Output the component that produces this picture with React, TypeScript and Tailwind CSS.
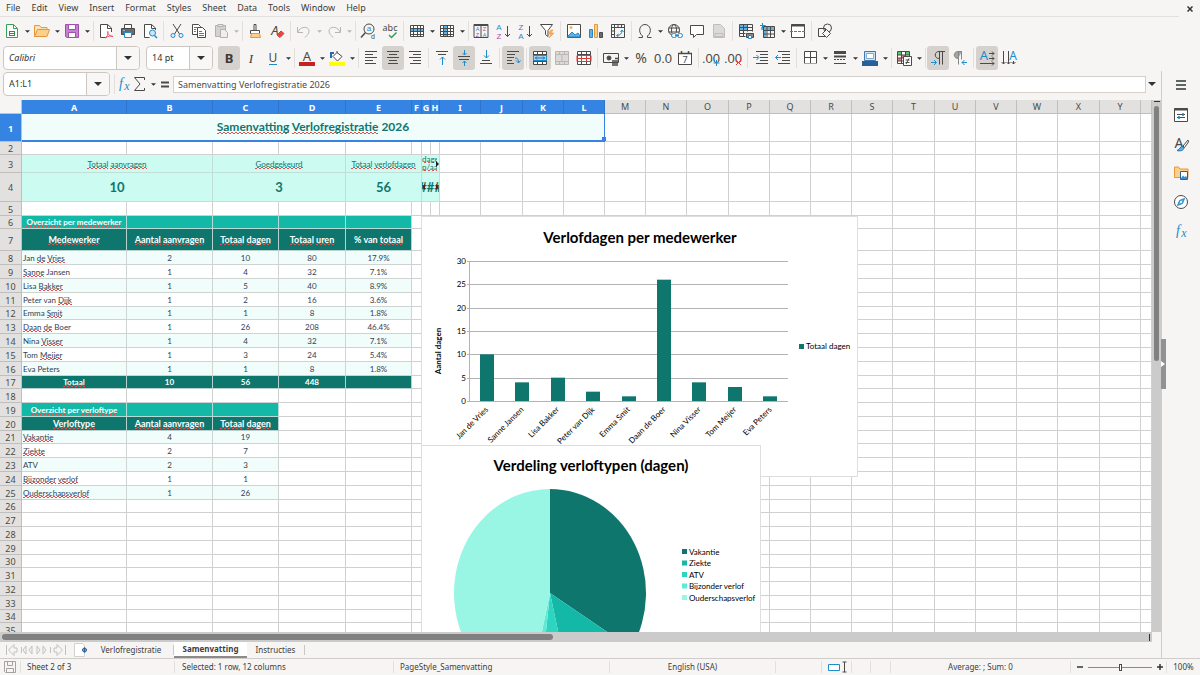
import React from 'react';
import clsx from 'clsx';

const DARK = '#4a4a48';
const BLUE = '#1e8bcd';
const PURPLE = '#a04fb0';
const ORANGE = '#e8963a';
const RED = '#d93a3a';

const grid = (
  <path d="M1.5 2.5h13v11h-13zM1.5 5.5h13M1.5 8.5h13M1.5 11.5h13M4.5 2.5v11M8.5 2.5v11M11.5 2.5v11" />
);

const glyph = (text: string, x: number, y: number, size: number, fill = DARK, extra = "font-['Noto_Sans',sans-serif]") => (
  <text x={x} y={y} fontSize={size} fill={fill} stroke="none" textAnchor="middle" className={extra}>
    {text}
  </text>
);

const SMALL = "font-['Liberation_Sans',sans-serif]";

const fx = (
  <>
    <text x="5" y="12" fontSize="14" fill={BLUE} stroke="none" textAnchor="middle" className="font-['Liberation_Serif',serif] italic">f</text>
    <text x="11" y="14" fontSize="12" fill={BLUE} stroke="none" textAnchor="middle" className="font-['Liberation_Serif',serif] italic">x</text>
  </>
);

const ICONS: Record<string, React.ReactNode> = {
  new: (
    <>
      <path d="M2.5 1.5h7l4 4v9h-11z" fill="#fff" stroke="#38a157" />
      <path d="M9.5 1.5v4h4" stroke="#38a157" />
      <path d="M5 8.5h6M5 10.5h6M5 12.5h6M5.5 8v5M10.5 8v5" stroke="#2e8f4b" />
    </>
  ),
  open: (
    <>
      <path d="M.5 13.5v-11h5l1.5 2h6v3" fill="#fbe3b8" stroke={ORANGE} />
      <path d="M.5 13.5l3-7h12l-2.5 7z" fill="#fbd08c" stroke={ORANGE} />
    </>
  ),
  save: (
    <>
      <path d="M1.5 1.5h13v13h-12l-1-1z" fill="#c583cf" stroke={PURPLE} />
      <path d="M4.5 1.5h7v5h-7z" fill="#fff" stroke={PURPLE} />
      <path d="M4.5 9.5h7v5h-7z" fill="#fff" stroke={PURPLE} />
    </>
  ),
  pdf: (
    <>
      <path d="M13.5 9v-4l-4-3.5h-7v13h6" fill="#fff" />
      <path d="M9.5 1.5v4h4" />
      <path d="M7 15c2-1 3.5-4 3-6.5-1.5 0 0 4.500 5 5-2-1-5-.5-8 1.5z" stroke="#e8556a" />
    </>
  ),
  print: (
    <>
      <path d="M4.5 5v-3.5h7v3.5" fill="#fff" />
      <path d="M1.5 5.5h13v6h-13z" fill="#6b6b69" />
      <path d="M4.5 9.5h7v5h-7z" fill="#fff" stroke={BLUE} />
      <path d="M3 7.5h2" stroke="#7cc3ee" />
    </>
  ),
  preview: (
    <>
      <path d="M13.5 7v-2l-4-3.500h-7v13h5" fill="#fff" />
      <path d="M9.5 1.5v4h4" />
      <circle cx="10.5" cy="10" r="3" fill="#cde6f7" stroke={BLUE} />
      <path d="M12.5 12.5l2.5 2.5" stroke={BLUE} strokeWidth="1.5" />
    </>
  ),
  cut: (
    <>
      <path d="M4 1l6.5 10M12 1l-6.5 10" />
      <circle cx="4" cy="12.5" r="2" stroke={BLUE} />
      <circle cx="12" cy="12.5" r="2" stroke={BLUE} />
    </>
  ),
  copy: (
    <>
      <path d="M1.5 1.5h6l2 2v8h-8z" fill="#fff" />
      <path d="M6.5 4.5h5l3 3v7h-8z" fill="#fff" />
      <path d="M8 8.5h3M8 10.5h5M8 12.5h5M3 4.5h3M3 6.5h2M3 8.5h2" stroke={BLUE} />
    </>
  ),
  paste: (
    <>
      <path d="M2.5 2.5h10v11h-10z" fill="#d4d2cf" stroke="#b4b1ad" />
      <path d="M5 1.5h5v2h-5z" fill="#e8e6e3" stroke="#b4b1ad" />
      <path d="M7.5 6.5h4l3 3v5h-7z" fill="#efeeec" stroke="#b4b1ad" />
    </>
  ),
  brush: (
    <>
      <path d="M7 1.5h2v6h-2zM3.5 7.5h9v3h-9z" fill="#fff" />
      <path d="M4.5 10.5h8l1 4h-10z" fill="#fbd08c" stroke={ORANGE} />
    </>
  ),
  clear: (
    <>
      {glyph('A', 6, 12, 13, DARK, "italic font-['Noto_Sans',sans-serif]")}
      <path d="M8 12l4-4 3 2.5-4 4z" fill="#e2474f" stroke={RED} />
    </>
  ),
  undo: <path d="M1.5 4v5.5h5.5M2 9c2-6 11-6 11-1 0 3-2 4-4 6.5" stroke="#b9b6b2" />,
  redo: <path d="M14.5 4v5.5h-5.5M14 9c-2-6-11-6-11-1 0 3 2 4 4 6.5" stroke="#b9b6b2" />,
  find: (
    <>
      <circle cx="9" cy="6" r="5" />
      <path d="M5.5 9.5l-4.5 5" strokeWidth="1.5" />
      {glyph('a', 9, 7.5, 8, BLUE, SMALL)}
      {glyph('d', 13, 15.5, 7, DARK, SMALL)}
    </>
  ),
  spell: (
    <>
      {glyph('abc', 8, 8, 9)}
      <path d="M7 12l2.5 2.5 5-5" stroke="#32a058" strokeWidth="1.5" />
    </>
  ),
  row: (
    <>
      <path d="M1 3h14v10h-14z" fill="#fff" stroke="none" />
      <path d="M1 5.5h14v3h-14z" fill="#5fb2e6" stroke="none" />
      {grid}
    </>
  ),
  col: (
    <>
      <path d="M1 2h14v12h-14z" fill="#fff" stroke="none" />
      <path d="M5 2h4v12h-4z" fill="#5fb2e6" stroke="none" />
      {grid}
    </>
  ),
  sort: (
    <>
      <path d="M1 1.5h14v13h-14zM8 1v14M1 2.5h14" />
      {glyph('A', 4.5, 8, 5.5, BLUE, SMALL)}
      {glyph('Z', 4.5, 14, 5.500, PURPLE, SMALL)}
      {glyph('Z', 11.5, 8, 5.5, PURPLE, SMALL)}
      {glyph('A', 11.5, 14, 5.5, BLUE, SMALL)}
    </>
  ),
  asc: (
    <>
      {glyph('A', 4, 6.5, 8, BLUE, SMALL)}
      {glyph('Z', 4, 15.5, 8, PURPLE, SMALL)}
      <path d="M12.5 3v10.5M10 11l2.5 2.5 2.5-2.5" />
    </>
  ),
  desc: (
    <>
      {glyph('Z', 4, 6.5, 8, PURPLE, SMALL)}
      {glyph('A', 4, 15.5, 8, BLUE, SMALL)}
      <path d="M12.5 3v10.5M10 11l2.5 2.5 2.5-2.5" />
    </>
  ),
  filter: (
    <>
      <path d="M1.5 1.5h12l-4.5 6v6l-2.5-2v-4z" fill="#fff" />
      <path d="M12 7l-3 4h3l-2 4 5-5h-3l2-3z" fill="#f7b45c" stroke={ORANGE} strokeWidth=".6" />
    </>
  ),
  image: (
    <>
      <path d="M1.5 1.5h13v13h-13z" fill="#fff" />
      <path d="M2 13l4-4 3 3 3-2 2 3v1h-12z" fill="#5fb2e6" stroke={BLUE} />
      <circle cx="5" cy="4.5" r="1.5" fill="#f7b45c" stroke="none" />
    </>
  ),
  chart: (
    <>
      <path d="M1.5 6.5h3v8h-3z" fill="#5fb2e6" stroke={BLUE} />
      <path d="M6.5 1.5h3v13h-3z" fill="#fbd08c" stroke={ORANGE} />
      <path d="M11.5 9.5h3v5h-3z" fill="#6b6b69" />
    </>
  ),
  pivot: (
    <>
      <path d="M1.5 1.5h13v13h-13zM1.5 4.5h13M4.5 1.5v13M8 2v2M11.5 2v2M2 8h2M2 11.5h2" />
      <path d="M7 12.5c3 0 5-2 5-5M10.5 9l1.5-2 1.5 2M8.5 11l-2 1.5 2 1.5" stroke={BLUE} />
    </>
  ),
  omega: <path d="M1.5 14.5h4v-1.5c-5-4-3-11.5 2.5-11.5s7.5 7.5 2.5 11.5v1.5h4" />,
  link: (
    <>
      <circle cx="7" cy="7" r="5.5" />
      <ellipse cx="7" cy="7" rx="2.5" ry="5.5" />
      <path d="M1.5 5h11M1.5 9h11" />
      <path d="M5 10h11v5h-11z" fill="#f6f5f4" stroke="none" />
      <rect x="4.5" y="10.5" width="5" height="4" rx="2" stroke={BLUE} />
      <rect x="10.5" y="10.5" width="5" height="4" rx="2" stroke={BLUE} />
      <path d="M8 12.5h4" stroke={BLUE} />
    </>
  ),
  comment: <path d="M1.5 2.5h13v9h-7l-3 3v-3h-3z" fill="#fff" />,
  header: <path d="M2.5 1.5h7l4 4v9h-11zM4 10.5h8v3h-8z" fill="#dcdad7" stroke="#c1beba" />,
  printArea: (
    <>
      <path d="M1 2h9v6h-9z" fill="#5fb2e6" stroke="none" />
      <path d="M1.5 13.5v-12h13v7M1.5 4.5h13M1.5 7.5h13M1.5 10.5h6M5.5 1.5v12M9.5 1.5v7M1.5 13.5h6" />
      <path d="M8.5 10.5h7v4h-7z" fill="#8a8886" />
      <path d="M10.5 12.5h3v3h-3z" fill="#fff" stroke={BLUE} />
    </>
  ),
  freeze: (
    <>
      <path d="M1 4h14v3h-14zM3 2h3v13h-3z" fill="#5fb2e6" stroke="none" />
      <path d="M3.5 3.5h11v11h-11zM3.5 7.5h11M3.5 11h11M7 3.5v11M10.5 3.5v11" />
      <path d="M2.5 0v5M0 2.5h5" stroke={BLUE} />
    </>
  ),
  split: (
    <>
      <path d="M1.5 1.5h13v13h-13z" fill="#fff" />
      <path d="M1 2.5h14" strokeWidth="2" />
      <path d="M0 8.5h16" stroke={BLUE} strokeDasharray="3 1" />
    </>
  ),
  shapes: (
    <>
      <path d="M1.5 5.5h7v8h-7z" />
      <circle cx="10.5" cy="5" r="4" />
      <path d="M9.5 6.5l4 4-4 4-4-4z" fill="#f6f5f4" />
    </>
  ),
  bold: glyph('B', 8, 12.5, 13, '#3a3a38', "font-bold font-['Noto_Sans',sans-serif]"),
  italic: glyph('I', 8, 12.5, 13, '#3a3a38', "italic font-['Liberation_Serif',serif]"),
  underline: (
    <>
      {glyph('U', 8, 11.5, 12)}
      <path d="M4 14.5h8" stroke={BLUE} />
    </>
  ),
  fontColor: (
    <>
      {glyph('A', 8, 10.5, 13)}
      <path d="M0 14h16" stroke="#c9211e" strokeWidth="4" />
    </>
  ),
  highlight: (
    <>
      <path d="M4 6.5l4-4 5 4-4.5 4.5zM8 3v-2" fill="#fff" />
      <path d="M2 8v-5h3" stroke="#1e6fb0" strokeWidth="2" />
      <path d="M0 14h16" stroke="#ffff00" strokeWidth="4" />
    </>
  ),
  left: <path d="M2 1.5h12M2 4.5h8M2 7.5h12M2 10.5h8M2 13.5h11" />,
  center: <path d="M2 1.5h12M4 4.5h8M2 7.5h12M4 10.5h8M3 13.5h10" />,
  right: <path d="M2 1.5h12M6 4.5h8M2 7.5h12M6 10.5h8M3 13.5h11" />,
  top: (
    <>
      <path d="M2 1.5h12M4 4.5h8" />
      <path d="M8.5 15v-8M6 9.5l2.5-2.5 2.5 2.5" stroke={BLUE} />
    </>
  ),
  middle: (
    <>
      <path d="M2 6.5h12M3 9.5h10" />
      <path d="M8.5 0v5M6.5 3l2 2 2-2M8.5 16v-5M6.5 13l2-2 2 2" stroke={BLUE} />
    </>
  ),
  bottom: (
    <>
      <path d="M4 10.5h8M2 13.5h12" />
      <path d="M8.5 0v8M6 5.5l2.5 2.5 2.5-2.5" stroke={BLUE} />
    </>
  ),
  wrap: (
    <>
      <path d="M2 1.5h12M2 4.5h8M2 7.5h7M2 10.5h5M2 13.5h7" />
      <path d="M10 8c3 0 3.500 2 3.500 4.5M11 10.5l2.5 2.5 2-2.5" stroke={BLUE} />
    </>
  ),
  merge: (
    <>
      <path d="M1.5 1.5h13v13h-13z" fill="#fff" />
      <path d="M1.5 4.5h13M1.5 11.5h13M5.5 1.5v3M10.5 1.5v3M5.5 11.5v3M10.5 11.5v3" />
      <path d="M1.5 5.5h13v5h-13z" fill="#a9d5f2" stroke={BLUE} />
      <path d="M3 8h10M5 6.5l-1.5 1.5 1.5 1.5M11 6.5l1.5 1.5-1.5 1.5" stroke="#1e6fb0" />
    </>
  ),
  unmerge: <path d="M1.5 1.5h13v13h-13zM1.5 4.5h13M1.5 11.5h13M5.5 1.5v3M10.5 1.5v3M5.5 11.5v3M10.5 11.5v3M8 5v6" fill="#dcdad7" stroke="#bab7b3" />,
  splitCells: (
    <>
      <path d="M1.5 1.5h13v13h-13zM1.5 4.5h13M5.5 1.5v13M10.5 1.5v13" fill="#fff" />
      <path d="M1 5.5h14v6h-14zM5.5 5.5v6M10.5 5.5v6M1 8.5h14" stroke={RED} />
    </>
  ),
  currency: (
    <>
      <path d="M.5 3.5h15v9h-15z" />
      <circle cx="6" cy="8" r="2" fill={DARK} />
      <path d="M9 11h6M9 13h6M9 15h6M12 8.5h3" strokeWidth="1.5" />
    </>
  ),
  percent: glyph('%', 8, 13, 14),
  number: glyph('0.0', 8, 13, 13, DARK, SMALL),
  date: (
    <>
      <path d="M1.5 3.5h13v11h-13z" fill="#fff" />
      <path d="M1 3.5h14M4.5 1v3M11.5 1v3" strokeWidth="1.5" />
      {glyph('7', 8, 13, 9)}
    </>
  ),
  addDecimal: (
    <>
      {glyph('.00', 7, 12.5, 13, DARK, SMALL)}
      <path d="M12.5 10v6M9.500 13h6" stroke={BLUE} />
    </>
  ),
  delDecimal: (
    <>
      {glyph('.00', 7, 12.5, 13, DARK, SMALL)}
      <path d="M10 10l5 5M15 10l-5 5" stroke={RED} />
    </>
  ),
  indent: (
    <>
      <path d="M3 1.5h12M7 4.5h8M7 7.5h8M7 10.5h8M3 13.5h12" />
      <path d="M0 7.5h5.5M3.5 5l2.5 2.5-2.5 2.5" stroke={BLUE} />
    </>
  ),
  outdent: (
    <>
      <path d="M3 1.5h12M7 4.5h8M7 7.5h8M7 10.5h8M3 13.5h12" />
      <path d="M.5 7.5h5.5M3 5l-2.5 2.5 2.5 2.5" stroke={BLUE} />
    </>
  ),
  borders: (
    <>
      <path d="M2.5 13.5v-12h12v12M2.5 7.5h12M8.5 1.5v12" fill="#fff" />
      <path d="M2 13.5h13" stroke={ORANGE} />
    </>
  ),
  lines: (
    <>
      <path d="M2 2.5h12" strokeWidth="3" />
      <path d="M2 6.5h12" strokeWidth="2" />
      <path d="M2 9.5h12" strokeDasharray="2 1" />
      <path d="M2 13.5h12" />
    </>
  ),
  borderColor: (
    <>
      <path d="M2.5 1.5h11v9h-11z" fill="#cde6f7" stroke="#3c78b4" />
      <path d="M4.5 3.5h7v5h-7z" fill="#fff" stroke="#8aa9c4" />
      <path d="M0 13.5h16" stroke="#2a6099" strokeWidth="5" />
    </>
  ),
  conditional: (
    <>
      <path d="M1.5 1.5h12v12h-12z" fill="#fff" />
      <path d="M2 2h4v3h-4zM10 2h3v3h-3z" fill="#5ec274" stroke="none" />
      <path d="M6 5h4v3h-4zM2 8h4v3h-4z" fill="#ef7a7a" stroke="none" />
      <path d="M1.5 5h12M1.5 8h12M1.5 11h12M5.5 1.5v12M9.5 1.5v12" />
      <path d="M7.5 6.5h8v9h-8z" fill="#fff" />
      <path d="M9.5 10h4M9.5 12.5h4M13 8.5l-3 5.5" />
    </>
  ),
  ltr: (
    <>
      <path d="M9 8.5c-5 0-5-7 0-7h6M9.5 1.5v13M12.5 1.5v13" />
      <path d="M1 12.5h5M4 10l2.5 2.5-2.5 2.5" stroke={BLUE} />
    </>
  ),
  rtl: (
    <>
      <path d="M6 8.5c-5 0-5-7 0-7h4M6.5 1.5v13M9.5 1.5v8" fill="#a5a3a0" stroke="#8a8885" />
      <path d="M10 12.5h5M12.5 10l-2.500 2.5 2.5 2.5" stroke={BLUE} />
    </>
  ),
  horizontal: (
    <>
      {glyph('A', 5, 10, 13, BLUE)}
      <path d="M10 3.5h5M13 1.5l2 2-2 2M10 8.5h5M13 6.5l2 2-2 2M1 13.5h14M13 11.5l2 2-2 2" />
    </>
  ),
  vertical: (
    <>
      {glyph('A', 12, 10, 12, BLUE)}
      <path d="M2.5 1v13M.5 12l2 2 2-2M7.5 1v13M5.5 12l2 2 2-2M12.5 11v3M10.5 12l2 2 2-2" />
    </>
  ),
  fx,
  sigma: <path d="M12.5 4v-2.5h-10l5.5 6.5-5.5 6.5h10v-2.5" />,
  equals: <path d="M4 6.5h8M4 10.5h8" strokeWidth="2" />,
  hamburger: <path d="M3 4h10M3 8h10M3 12h10" stroke="#2e3436" strokeWidth="1.5" />,
  properties: (
    <>
      <path d="M1.5 1.5h13v13h-13z" fill="#fff" />
      <path d="M1 2.5h14" strokeWidth="2" />
      <path d="M4 7.5h8M4 10.5h8" />
      <path d="M10 6v3M6 9v3" stroke={BLUE} strokeWidth="1.5" />
    </>
  ),
  styles: (
    <>
      {glyph('A', 6, 11.5, 14)}
      <path d="M15 4l-5 6 1.5 1.5 4-5.5z" fill="#fff" />
      <path d="M4 14.5c3 1 7 0 7-3l-2-1c-2 0-2 3-5 4z" fill="#5fb2e6" stroke="#1e6fb0" />
    </>
  ),
  gallery: (
    <>
      <path d="M1.5 12.5v-10.5h4l1.5 2h8v8.5z" fill="#fbd08c" stroke={ORANGE} />
      <path d="M7.5 6.5h7v8h-7z" fill="#fff" stroke="#2a6099" />
      <path d="M8 13l2-2.5 1.5 1.5 1.5-1 1 1.5v1.5h-6z" fill="#3a8fd0" stroke="none" />
    </>
  ),
  navigator: (
    <>
      <circle cx="8" cy="8" r="6.5" fill="#fff" />
      <path d="M11.5 4.5l-2 5-5 2 2-5z" fill="#5fb2e6" stroke={BLUE} />
      <circle cx="8" cy="8" r="1" fill="#fff" stroke="none" />
    </>
  ),
  docSave: (
    <>
      <path d="M2.5 2.5h11v11h-10l-1-1z" stroke="#a5a3a0" />
      <path d="M5.5 2.5h5v4h-5zM4.5 9.5h7v4h-7z" stroke="#a5a3a0" />
    </>
  ),
};

const Icon: React.FC<{ name: string }> = ({ name }) => (
  <svg viewBox="0 0 16 16" fill="none" stroke={DARK} strokeWidth="1" className="size-4 shrink-0 overflow-visible" aria-hidden="true">
    {ICONS[name]}
  </svg>
);

const Caret: React.FC<{ big?: boolean; faded?: boolean }> = ({ big, faded }) => (
  <svg viewBox="0 0 8 4" className={clsx(big ? 'h-1 w-2' : 'h-[3px] w-[5px]', 'shrink-0')} fill={faded ? '#b9b6b2' : '#2e3436'} aria-hidden="true">
    <path d="M0 0h8l-4 4z" />
  </svg>
);

interface Tool {
  icon: string;
  label: string;
  menu?: boolean;
  active?: boolean;
  disabled?: boolean;
}

type ToolGroup = Tool[];

const STANDARD: ToolGroup[] = [
  [
    { icon: 'new', label: 'New', menu: true },
    { icon: 'open', label: 'Open', menu: true },
    { icon: 'save', label: 'Save', menu: true },
  ],
  [
    { icon: 'pdf', label: 'Export as PDF' },
    { icon: 'print', label: 'Print' },
    { icon: 'preview', label: 'Print preview' },
  ],
  [
    { icon: 'cut', label: 'Cut' },
    { icon: 'copy', label: 'Copy' },
    { icon: 'paste', label: 'Paste', menu: true, disabled: true },
  ],
  [
    { icon: 'brush', label: 'Clone formatting' },
    { icon: 'clear', label: 'Clear formatting' },
  ],
  [
    { icon: 'undo', label: 'Undo', menu: true, disabled: true },
    { icon: 'redo', label: 'Redo', menu: true, disabled: true },
  ],
  [
    { icon: 'find', label: 'Find and replace' },
    { icon: 'spell', label: 'Spelling' },
  ],
  [
    { icon: 'row', label: 'Row', menu: true },
    { icon: 'col', label: 'Column', menu: true },
  ],
  [
    { icon: 'sort', label: 'Sort' },
    { icon: 'asc', label: 'Sort ascending' },
    { icon: 'desc', label: 'Sort descending' },
    { icon: 'filter', label: 'AutoFilter' },
  ],
  [
    { icon: 'image', label: 'Insert image' },
    { icon: 'chart', label: 'Insert chart' },
    { icon: 'pivot', label: 'Insert pivot table' },
  ],
  [
    { icon: 'omega', label: 'Special character', menu: true },
    { icon: 'link', label: 'Insert hyperlink' },
    { icon: 'comment', label: 'Insert comment' },
    { icon: 'header', label: 'Headers and footers', disabled: true },
  ],
  [
    { icon: 'printArea', label: 'Define print area' },
    { icon: 'freeze', label: 'Freeze rows and columns', menu: true },
    { icon: 'split', label: 'Split window' },
  ],
  [{ icon: 'shapes', label: 'Show draw functions' }],
];

const FORMATTING: ToolGroup[] = [
  [
    { icon: 'bold', label: 'Bold', active: true },
    { icon: 'italic', label: 'Italic' },
    { icon: 'underline', label: 'Underline', menu: true },
  ],
  [
    { icon: 'fontColor', label: 'Font color', menu: true },
    { icon: 'highlight', label: 'Background color', menu: true },
  ],
  [
    { icon: 'left', label: 'Align left' },
    { icon: 'center', label: 'Center horizontally', active: true },
    { icon: 'right', label: 'Align right' },
  ],
  [
    { icon: 'top', label: 'Align top' },
    { icon: 'middle', label: 'Center vertically', active: true },
    { icon: 'bottom', label: 'Align bottom' },
  ],
  [{ icon: 'wrap', label: 'Wrap text', active: true }],
  [
    { icon: 'merge', label: 'Merge and center', active: true },
    { icon: 'unmerge', label: 'Merge cells', disabled: true },
    { icon: 'splitCells', label: 'Unmerge cells' },
  ],
  [
    { icon: 'currency', label: 'Format as currency', menu: true },
    { icon: 'percent', label: 'Format as percent' },
    { icon: 'number', label: 'Format as number' },
    { icon: 'date', label: 'Format as date' },
  ],
  [
    { icon: 'addDecimal', label: 'Add decimal place' },
    { icon: 'delDecimal', label: 'Delete decimal place' },
  ],
  [
    { icon: 'indent', label: 'Increase indent' },
    { icon: 'outdent', label: 'Decrease indent' },
  ],
  [
    { icon: 'borders', label: 'Borders', menu: true },
    { icon: 'lines', label: 'Border style', menu: true },
    { icon: 'borderColor', label: 'Border color', menu: true },
  ],
  [{ icon: 'conditional', label: 'Conditional formatting', menu: true }],
  [
    { icon: 'ltr', label: 'Left to right', active: true },
    { icon: 'rtl', label: 'Right to left' },
  ],
  [
    { icon: 'horizontal', label: 'Text direction horizontal', active: true },
    { icon: 'vertical', label: 'Text direction vertical' },
  ],
];

const ToolButton: React.FC<{ tool: Tool }> = ({ tool }) => (
  <>
    <button
      type="button"
      aria-label={tool.label}
      disabled={tool.disabled}
      className={clsx('flex h-6 w-[22px] shrink-0 items-center justify-center rounded-[3px]', tool.active && 'bg-[#d5d1cd]')}
    >
      <Icon name={tool.icon} />
    </button>
    {tool.menu && (
      <button type="button" aria-label={`${tool.label} options`} disabled={tool.disabled} className="flex h-6 w-2 shrink-0 items-center justify-center pt-0.5">
        <Caret faded={tool.disabled} />
      </button>
    )}
  </>
);

const ToolGroups: React.FC<{ groups: ToolGroup[] }> = ({ groups }) => (
  <>
    {groups.map((group, i) => (
      <React.Fragment key={i}>
        {i > 0 && (
          <div className={clsx('flex h-5 shrink-0 justify-center', groups[i - 1][groups[i - 1].length - 1].menu ? 'w-1' : 'w-[5px]')}>
            <span className="w-px bg-[#e2dfdc]" />
          </div>
        )}
        {group.map((tool) => (
          <ToolButton key={tool.icon} tool={tool} />
        ))}
      </React.Fragment>
    ))}
  </>
);

const MENUS = ['File', 'Edit', 'View', 'Insert', 'Format', 'Styles', 'Sheet', 'Data', 'Tools', 'Window', 'Help'];

const MenuBar: React.FC = () => (
  <div className="flex h-[17px] shrink-0 items-center justify-between pr-[7px]">
    <nav className="flex h-full flex-1 items-center gap-[11px] border-b border-[#e3e1df] pl-1.5">
      {MENUS.map((menu) => (
        <button key={menu} type="button">{menu}</button>
      ))}
    </nav>
    <button type="button" aria-label="Close document" className="ml-2">
      <svg viewBox="0 0 6 6" className="size-1.5" stroke="#2e3436" strokeWidth="1.5" aria-hidden="true">
        <path d="M.5.5l5 5M5.5.5l-5 5" />
      </svg>
    </button>
  </div>
);

interface ComboProps {
  label: string;
  value: string;
  className: string;
}

const Combo: React.FC<ComboProps> = ({ label, value, className }) => (
  <div className={clsx('relative h-6 shrink-0 overflow-hidden rounded-[4px] border border-[#cdc7c2] bg-white', className)}>
    <select aria-label={label} defaultValue={value} className="h-full w-full appearance-none bg-transparent pl-[5px] text-[9px] text-[#2e3436] outline-none">
      <option>{value}</option>
    </select>
    <span className="pointer-events-none absolute inset-y-0 right-0 flex w-[23px] items-center justify-center border-l border-[#cdc7c2] bg-[#f8f7f6]">
      <Caret big />
    </span>
  </div>
);

const FormulaBar: React.FC = () => (
  <div className="flex h-[29px] shrink-0 items-center pr-[5px] pb-[3px] pl-[3px]">
    <div className="flex h-6 w-[107px] shrink-0 overflow-hidden rounded-[4px] border border-[#cdc7c2] bg-white">
      <input aria-label="Name box" defaultValue="A1:L1" className="w-0 flex-1 pl-[5px] text-[9px] text-[#2e3436] outline-none" />
      <button type="button" aria-label="Named ranges" className="flex w-[23px] items-center justify-center border-l border-[#cdc7c2] bg-[#f8f7f6]">
        <Caret big />
      </button>
    </div>
    <span className="mr-px ml-1 h-5 w-px shrink-0 bg-[#e2dfdc]" />
    <button type="button" aria-label="Function wizard" className="shrink-0"><Icon name="fx" /></button>
    <button type="button" aria-label="Select function" className="flex w-6 shrink-0 items-center gap-[3px]">
      <Icon name="sigma" />
      <Caret />
    </button>
    <button type="button" aria-label="Formula" className="ml-px shrink-0"><Icon name="equals" /></button>
    <input
      aria-label="Formula input"
      defaultValue="Samenvatting Verlofregistratie 2026"
      className="h-[17px] min-w-0 flex-1 border border-[#d3d0cd] bg-white px-1 text-[9px] text-[#4a4a48] outline-none"
    />
    <button type="button" aria-label="Expand formula bar" className="ml-0.5 shrink-0"><Caret big /></button>
  </div>
);

/* Sheet: the last column has no letter and takes whatever width is left */

const COLUMNS: [string, string][] = [
  ['A', 'w-[105px]'], ['B', 'w-[86px]'], ['C', 'w-[66px]'], ['D', 'w-[67px]'], ['E', 'w-[66px]'],
  ['F', 'w-[10px]'], ['G', 'w-[9px]'], ['H', 'w-[9px]'], ['I', 'w-[41px]'], ['J', 'w-[42px]'],
  ['K', 'w-[41px]'], ['L', 'w-[41px]'], ['M', 'w-[41px]'], ['N', 'w-[41px]'], ['O', 'w-[42px]'],
  ['P', 'w-[41px]'], ['Q', 'w-[41px]'], ['R', 'w-[41px]'], ['S', 'w-[41px]'], ['T', 'w-[42px]'],
  ['U', 'w-[41px]'], ['V', 'w-[41px]'], ['W', 'w-[41px]'], ['X', 'w-[42px]'], ['Y', 'w-[41px]'],
  ['', 'w-auto'],
];

const ROW_HEIGHTS = [
  'h-[28px]', 'h-[13px]', 'h-[18px]', 'h-[29px]', 'h-[14px]', 'h-[13px]', 'h-[22px]',
  'h-[14px]', 'h-[14px]', 'h-[14px]', 'h-[14px]', 'h-[13px]', 'h-[14px]', 'h-[14px]', 'h-[14px]', 'h-[14px]', 'h-[13px]',
  'h-[14px]', 'h-[14px]', 'h-[14px]', 'h-[13px]', 'h-[14px]', 'h-[14px]', 'h-[14px]', 'h-[14px]', 'h-[13px]',
  'h-[14px]', 'h-[14px]', 'h-[14px]', 'h-[13px]', 'h-[14px]', 'h-[14px]', 'h-[14px]', 'h-[13px]', 'h-[14px]',
];

const UNKNOWN_WORDS = new Set([
  'Samenvatting', 'Verlofregistratie', 'Totaal', 'aanvragen', 'Goedgekeurd', 'verlofdagen', 'dagen', 'p/aanvraag',
  'Overzicht', 'medewerker', 'Medewerker', 'Aantal', 'uren', 'totaal', 'de', 'Vries', 'Sanne', 'Bakker', 'Dijk',
  'Smit', 'Daan', 'Visser', 'Meijer', 'verloftype', 'Verloftype', 'Vakantie', 'Ziekte', 'Bijzonder', 'verlof',
  'Ouderschapsverlof',
]);

// Two rows of dashes, one pixel apart and out of step, read as a tight zigzag
const SQUIGGLE =
  'bg-[image:linear-gradient(90deg,#e0504c_50%,transparent_50%),linear-gradient(90deg,#e0504c_50%,transparent_50%)] bg-[length:4px_1px] bg-[position:0_100%,2px_calc(100%-1px)] bg-repeat-x';

const Spelled: React.FC<{ text: string }> = ({ text }) => (
  <>
    {text.split(' ').map((word, i) => (
      <React.Fragment key={i}>
        {i > 0 && ' '}
        <span className={clsx(UNKNOWN_WORDS.has(word) && SQUIGGLE)}>{word}</span>
      </React.Fragment>
    ))}
  </>
);

interface Cell {
  text?: string;
  node?: React.ReactNode;
  span?: number;
  className?: string;
}

const EMPLOYEES = [
  { name: 'Jan de Vries', requests: 2, days: 10, hours: 80, share: '17.9%' },
  { name: 'Sanne Jansen', requests: 1, days: 4, hours: 32, share: '7.1%' },
  { name: 'Lisa Bakker', requests: 1, days: 5, hours: 40, share: '8.9%' },
  { name: 'Peter van Dijk', requests: 1, days: 2, hours: 16, share: '3.6%' },
  { name: 'Emma Smit', requests: 1, days: 1, hours: 8, share: '1.8%' },
  { name: 'Daan de Boer', requests: 1, days: 26, hours: 208, share: '46.4%' },
  { name: 'Nina Visser', requests: 1, days: 4, hours: 32, share: '7.1%' },
  { name: 'Tom Meijer', requests: 1, days: 3, hours: 24, share: '5.4%' },
  { name: 'Eva Peters', requests: 1, days: 1, hours: 8, share: '1.8%' },
];

const LEAVE_TYPES = [
  { name: 'Vakantie', requests: 4, days: 19, color: '#0f766e' },
  { name: 'Ziekte', requests: 2, days: 7, color: '#14b8a6' },
  { name: 'ATV', requests: 2, days: 3, color: '#2dd4bf' },
  { name: 'Bijzonder verlof', requests: 1, days: 1, color: '#5eead4' },
  { name: 'Ouderschapsverlof', requests: 1, days: 26, color: '#99f6e4' },
];

const KPI_LABEL = 'bg-[#ccfbf1] border-[#c0dfd8] text-[8px] text-[#0f766e]';
const KPI_VALUE = 'bg-[#ccfbf1] border-[#c0dfd8] text-[13px] font-bold text-[#0f766e]';
const SECTION = 'bg-[#14b8a6] border-[#b5ddd7] text-[8px] font-bold text-white';
const HEADING = 'bg-[#0f766e] border-[#b5d0cd] text-[9px] font-bold text-white';
const TOTAL = 'bg-[#0f766e] border-[#b5d0cd] text-[8px] font-bold text-white';

const dataRow = (values: (string | number)[], index: number): Cell[] =>
  values.map((value, i) => ({
    text: String(value),
    className: clsx(
      'text-[8px] text-[#334155] border-[#cdd4d2]',
      index % 2 === 0 && 'bg-[#f0fdfa]',
      i === 0 && 'pl-px text-left',
    ),
  }));

const sameStyle = (texts: string[], className: string): Cell[] => texts.map((text) => ({ text, className }));

const ROWS: Record<number, Cell[]> = {
  1: [{
    span: 12,
    className: 'bg-[#f0fdfa] border-[#3584e4] border-b-2 text-[12px] font-bold text-[#0f766e]',
    node: (
      <div className="relative">
        <Spelled text="Samenvatting Verlofregistratie 2026" />
        <span className="absolute -right-0.5 -bottom-2 size-1 bg-[#3584e4]" />
      </div>
    ),
  }],
  3: [
    { text: 'Totaal aanvragen', span: 2, className: KPI_LABEL },
    { text: 'Goedgekeurd', span: 2, className: KPI_LABEL },
    { text: 'Totaal verlofdagen', span: 2, className: KPI_LABEL },
    {
      span: 2,
      className: KPI_LABEL,
      node: (
        <div className="relative h-[17px] overflow-hidden text-left leading-[8px]">
          <div className="w-[15px] overflow-hidden"><Spelled text="dagen" /></div>
          <div className="w-[15px] overflow-hidden"><Spelled text="p/aanvraag" /></div>
          <svg viewBox="0 0 3 6" className="absolute top-1.5 right-0 h-1.5 w-[3px]" fill="#2b1a1a" aria-hidden="true"><path d="M0 0l3 3-3 3z" /></svg>
        </div>
      ),
    },
  ],
  4: [
    { text: '10', span: 2, className: KPI_VALUE },
    { text: '3', span: 2, className: KPI_VALUE },
    { text: '56', span: 2, className: KPI_VALUE },
    {
      span: 2,
      className: KPI_VALUE,
      node: (
        <div className="relative flex justify-center overflow-hidden leading-4">
          <span>###</span>
          <svg viewBox="0 0 3 6" className="absolute top-[5px] left-0 h-1.5 w-[3px]" fill="#5a1a1a" aria-hidden="true"><path d="M3 0l-3 3 3 3z" /></svg>
          <svg viewBox="0 0 3 6" className="absolute top-[5px] right-0 h-1.5 w-[3px]" fill="#5a1a1a" aria-hidden="true"><path d="M0 0l3 3-3 3z" /></svg>
        </div>
      ),
    },
  ],
  6: sameStyle(['Overzicht per medewerker', '', '', '', ''], SECTION),
  7: sameStyle(['Medewerker', 'Aantal aanvragen', 'Totaal dagen', 'Totaal uren', '% van totaal'], HEADING),
  17: sameStyle(['Totaal', '10', '56', '448', ''], TOTAL),
  19: sameStyle(['Overzicht per verloftype', '', ''], SECTION),
  20: sameStyle(['Verloftype', 'Aantal aanvragen', 'Totaal dagen'], HEADING),
};

EMPLOYEES.forEach((e, i) => {
  ROWS[8 + i] = dataRow([e.name, e.requests, e.days, e.hours, e.share], i);
});
LEAVE_TYPES.forEach((t, i) => {
  ROWS[21 + i] = dataRow([t.name, t.requests, t.days], i);
});

const fillRow = (cells: Cell[] = []): Cell[] => {
  const used = cells.reduce((sum, cell) => sum + (cell.span ?? 1), 0);
  return [...cells, ...Array.from({ length: COLUMNS.length - used }, () => ({}))];
};

const Sheet: React.FC = () => (
  <table className="w-full table-fixed border-separate border-spacing-0 font-[Lato,sans-serif] leading-3">
    <colgroup>
      <col className="w-[22px]" />
      {COLUMNS.map(([letter, width]) => (
        <col key={letter} className={width} />
      ))}
    </colgroup>
    <thead>
      <tr className="h-[14px] font-['Noto_Sans',sans-serif] text-[9px]">
        <td className="border-r border-b border-[#c4c2c0] bg-[#f6f5f4] p-0" />
        {COLUMNS.map(([letter], i) => (
          <th
            key={letter}
            scope="col"
            className={clsx(
              'border-r p-0 text-center',
              i < 12 ? 'border-[#2f74c9] bg-[#3584e4] pt-px font-bold text-white' : 'border-b border-[#c0bfbd] bg-[#e2e1df] pt-px font-normal text-[#4a4a48]',
            )}
          >
            {letter}
          </th>
        ))}
      </tr>
    </thead>
    <tbody>
      {ROW_HEIGHTS.map((height, i) => (
        <tr key={i} className={height}>
          <th
            scope="row"
            className={clsx(
              "border-r border-b border-[#c0bfbd] p-0 pt-px text-center font-['Noto_Sans',sans-serif] text-[9px] leading-[11px]",
              i === 0 ? 'bg-[#3584e4] font-bold text-white' : 'bg-[#e2e1df] font-normal text-[#4a4a48]',
            )}
          >
            {i + 1}
          </th>
          {fillRow(ROWS[i + 1]).map((cell, j) => (
            <td
              key={j}
              colSpan={cell.span}
              className={clsx('border-r border-b p-0 whitespace-nowrap', cell.className ?? 'border-[#d0d0d0]', !cell.className?.includes('text-left') && 'text-center')}
            >
              {cell.node ?? (cell.text && <Spelled text={cell.text} />)}
            </td>
          ))}
        </tr>
      ))}
    </tbody>
  </table>
);

const BarChart: React.FC = () => {
  const left = 48;
  const base = 185;
  const unit = 140 / 30;
  const step = 319 / EMPLOYEES.length;
  return (
    <svg width="437" height="261" viewBox="0 0 437 261" className="font-[Lato,sans-serif]" role="img" aria-label="Verlofdagen per medewerker">
      <rect x=".5" y=".5" width="436" height="260" fill="#fff" stroke="#dedede" />
      <text x="219" y="27" fontSize="15" fontWeight="700" textAnchor="middle">Verlofdagen per medewerker</text>
      {[0, 5, 10, 15, 20, 25, 30].map((tick) => {
        const y = Math.round(base - tick * unit) + 0.5;
        return (
          <g key={tick}>
            <path d={`M${left - 2} ${y}H${left + 319}`} stroke="#b3b3b3" />
            <text x="45" y={y + 2} fontSize="8" textAnchor="end">{tick}</text>
          </g>
        );
      })}
      <path d={`M${left + 0.5} 45V${base}`} stroke="#b3b3b3" />
      {EMPLOYEES.map((e, i) => {
        const x = left + step * (i + 0.5);
        return (
          <g key={e.name}>
            <rect x={Math.round(x - 7)} y={base - e.days * unit} width="14" height={e.days * unit} fill="#0f766e" />
            <text x={x + 2} y="194" fontSize="8" textAnchor="end" transform={`rotate(-45 ${x + 2} 194)`}>{e.name}</text>
          </g>
        );
      })}
      <text x="20" y="135" fontSize="8" fontWeight="700" textAnchor="middle" transform="rotate(-90 20 135)">Aantal dagen</text>
      <rect x="378" y="128" width="5" height="5" fill="#0f766e" />
      <text x="385" y="133" fontSize="8">Totaal dagen</text>
    </svg>
  );
};

const PieChart: React.FC = () => {
  const total = LEAVE_TYPES.reduce((sum, t) => sum + t.days, 0);
  const point = (days: number) => {
    const angle = (days / total) * Math.PI * 2;
    return `${129 + 96 * Math.sin(angle)} ${148 - 104 * Math.cos(angle)}`;
  };
  let start = 0;
  return (
    <svg width="340" height="262" viewBox="0 0 340 262" className="font-[Lato,sans-serif]" role="img" aria-label="Verdeling verloftypen (dagen)">
      <rect x=".5" y=".5" width="339" height="261" fill="#fff" stroke="#dedede" />
      <text x="170" y="26" fontSize="15" fontWeight="700" textAnchor="middle">Verdeling verloftypen (dagen)</text>
      {LEAVE_TYPES.map((t) => {
        const from = start;
        start += t.days;
        const large = t.days > total / 2 ? 1 : 0;
        return <path key={t.name} d={`M129 148L${point(from)}A96 104 0 ${large} 1 ${point(start)}Z`} fill={t.color} />;
      })}
      {LEAVE_TYPES.map((t, i) => (
        <g key={t.name}>
          <rect x="261" y={104 + i * 11.5} width="5" height="5" fill={t.color} />
          <text x="268" y={109.5 + i * 11.5} fontSize="8">{t.name}</text>
        </g>
      ))}
    </svg>
  );
};

const SheetTabs: React.FC = () => (
  <div className="flex h-4 shrink-0 items-center text-[8px]">
    <svg viewBox="0 0 62 12" className="ml-[5px] h-3 w-[62px] shrink-0" fill="none" stroke="#c4c1bd" aria-hidden="true">
      <path d="M1.5 1v10M9 .5l-5.500 5.500 5.500 5.500v-3.500h3v-4h-3zM16.500 3v6M21 2l-3 4 3 4zM27 2l-3 4 3 4zM32 2l3 4-3 4zM38 2l3 4-3 4zM45.500 3v6M52 .5l5.500 5.500-5.500 5.500v-3.500h-3v-4h3zM60.500 1v10" />
    </svg>
    <button type="button" aria-label="Add sheet" className="ml-1.5 shrink-0">
      <svg viewBox="0 0 16 14" className="h-3.5 w-4" fill="none" aria-hidden="true">
        <path d="M1.5.5h8l2 2v11h-10z" fill="#fff" stroke="#d3d0cd" />
        <path d="M11.5 4.5v5M9 7h5" stroke="#2a6099" />
        <circle cx="11.5" cy="7" r="2" stroke="#2a6099" />
      </svg>
    </button>
    <button type="button" className="h-2.5 w-[85px] shrink-0 border-r border-[#cdc7c2] leading-[10px]">Verlofregistratie</button>
    <button type="button" aria-current="page" className="h-full w-[73px] shrink-0 border-b-2 border-[#8d8b88] bg-white font-bold">Samenvatting</button>
    <button type="button" className="h-2.5 w-[58px] shrink-0 border-r border-[#cdc7c2] leading-[10px]">Instructies</button>
  </div>
);

const StatusBar: React.FC = () => (
  <footer className="grid h-[17px] shrink-0 grid-cols-[21px_154fr_219fr_216fr_166fr_46px_30px_19px_20px_180fr_96px_33px] items-center border-t border-[#cfccc9] text-[8px] *:flex *:h-3 *:items-center *:border-r *:border-[#e2dfdc] *:whitespace-nowrap">
    <span className="justify-center"><Icon name="docSave" /></span>
    <span className="pl-1.5">Sheet 2 of 3</span>
    <span className="pl-[7px]">Selected: 1 row, 12 columns</span>
    <span className="pl-1.5">PageStyle_Samenvatting</span>
    <span className="justify-center">English (USA)</span>
    <span />
    <span className="pl-1.5">
      <svg viewBox="0 0 20 12" className="h-3 w-5" fill="none" aria-hidden="true">
        <path d="M.5 3.5h11v6h-11z" fill="#fff" stroke={BLUE} />
        <path d="M14.5 1h4M14.5 11h4M16.5 1v10" stroke={DARK} />
      </svg>
    </span>
    <span />
    <span />
    <span className="justify-center">Average: ; Sum: 0</span>
    <div className="gap-1 pl-[5px]">
      <button type="button" aria-label="Zoom out" className="flex">
        <svg viewBox="0 0 8 8" className="size-2" stroke="#2e3436" strokeWidth="1.5" aria-hidden="true"><path d="M1 4h6" /></svg>
      </button>
      <input
        type="range"
        aria-label="Zoom"
        defaultValue="50"
        className="h-2 w-[64px] appearance-none bg-transparent [&::-webkit-slider-runnable-track]:h-px [&::-webkit-slider-runnable-track]:bg-[#8d8b88] [&::-webkit-slider-thumb]:-mt-[3px] [&::-webkit-slider-thumb]:h-[7px] [&::-webkit-slider-thumb]:w-[3px] [&::-webkit-slider-thumb]:appearance-none [&::-webkit-slider-thumb]:border [&::-webkit-slider-thumb]:border-[#4a4a48] [&::-webkit-slider-thumb]:bg-white"
      />
      <button type="button" aria-label="Zoom in" className="flex">
        <svg viewBox="0 0 8 8" className="size-2" stroke="#2e3436" strokeWidth="1.5" aria-hidden="true"><path d="M1 4h6M4 1v6" /></svg>
      </button>
    </div>
    <span className="justify-center border-r-0!">100%</span>
  </footer>
);

const SIDEBAR = [
  ['properties', 'Properties'],
  ['styles', 'Styles'],
  ['gallery', 'Gallery'],
  ['navigator', 'Navigator'],
  ['fx', 'Functions'],
];

const Sidebar: React.FC = () => (
  <aside className="relative flex w-[39px] shrink-0 flex-col items-center gap-[13px] border-l border-[#cfccc9] pt-1.5">
    <button type="button" aria-label="Sidebar settings" className="mb-px"><Icon name="hamburger" /></button>
    {SIDEBAR.map(([icon, label]) => (
      <button key={icon} type="button" aria-label={label}><Icon name={icon} /></button>
    ))}
    <button type="button" aria-label="Hide sidebar" className="absolute top-[268px] -left-px flex h-[50px] w-[5px] items-center bg-[#929292]">
      <svg viewBox="0 0 4 6" className="h-1.5 w-1" fill="#fff" aria-hidden="true"><path d="M0 0l4 3-4 3z" /></svg>
    </button>
  </aside>
);

const App: React.FC = () => (
  <div className="flex h-screen flex-col overflow-hidden bg-[#f6f5f4] font-['Noto_Sans',sans-serif] text-[9px] leading-3 text-[#3d3d3b]">
    <MenuBar />
    <div className="flex h-[27px] shrink-0 items-center pl-px">
      <ToolGroups groups={STANDARD} />
    </div>
    <div className="flex h-[27px] shrink-0 items-center pl-[3px]">
      <Combo label="Font name" value="Calibri" className="w-[137px] italic" />
      <Combo label="Font size" value="14 pt" className="mr-[5px] ml-1.5 w-[67px]" />
      <ToolGroups groups={FORMATTING} />
    </div>
    <div className="flex min-h-0 flex-1">
      <main className="flex min-w-0 flex-1 flex-col">
        <FormulaBar />
        <div className="flex min-h-0 flex-1">
          <div className="relative min-w-0 flex-1 overflow-hidden bg-white">
            <Sheet />
            <div className="absolute top-[116px] left-[421px]"><BarChart /></div>
            <div className="absolute top-[345px] left-[421px]"><PieChart /></div>
          </div>
          <div className="flex w-[9px] shrink-0 flex-col items-center bg-[#cbcbcb]">
            <span className="mt-px h-px w-1.5 bg-[#2e3436]" />
            <span className="mt-1 h-[48%] w-[5px] rounded-full bg-[#808080]" />
          </div>
        </div>
        <div className="mr-[9px] flex h-2.5 shrink-0 items-center justify-between bg-[#cbcbcb] pr-0.5 pl-0.5">
          <span className="h-1.5 w-[48%] rounded-full bg-[#808080]" />
          <span className="h-[7px] w-px bg-[#2e3436]" />
        </div>
        <SheetTabs />
      </main>
      <Sidebar />
    </div>
    <StatusBar />
  </div>
);

export default App;
